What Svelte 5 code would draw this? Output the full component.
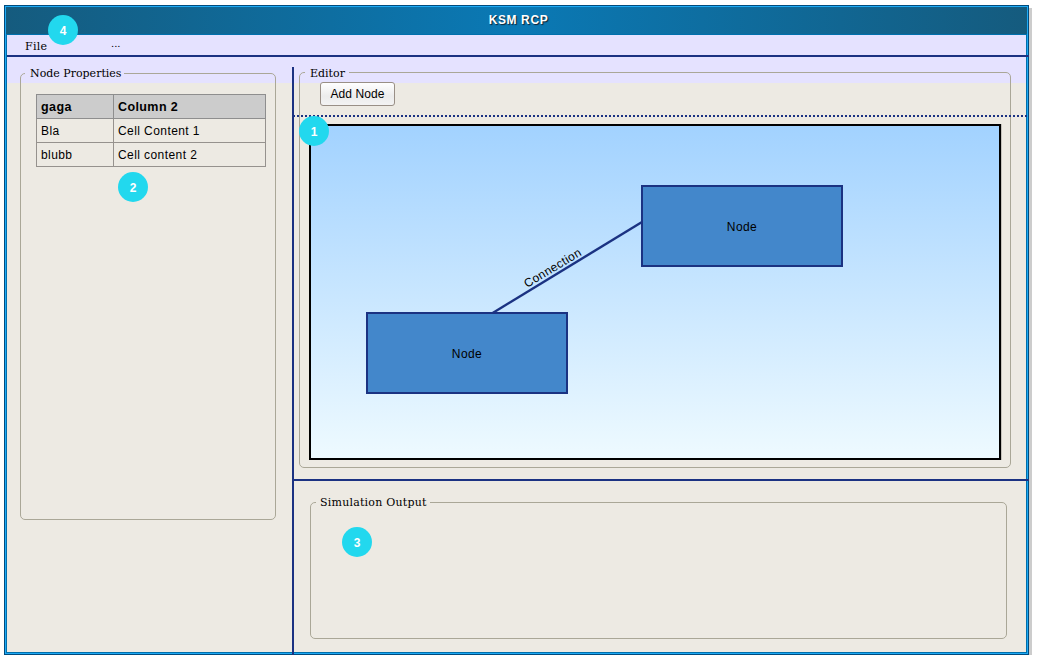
<script>
  const rows = [['Bla', 'Cell Content 1'], ['blubb', 'Cell content 2']];
  const nodes = [{ x: 331, y: 60 }, { x: 56, y: 187 }];
</script>

<div class="window">
  <header><span>KSM RCP</span></header>
  <nav><span class="file">File</span><span class="more">...</span></nav>
  <main>
    <aside>
      <fieldset class="properties">
        <legend>Node Properties</legend>
        <table>
          <thead><tr><th>gaga</th><th>Column 2</th></tr></thead>
          <tbody>
            {#each rows as row}
              <tr>{#each row as cell}<td>{cell}</td>{/each}</tr>
            {/each}
          </tbody>
        </table>
      </fieldset>
      <b class="badge two">2</b>
    </aside>
    <section class="right">
      <div class="top">
        <fieldset class="editor">
          <legend>Editor</legend>
          <button>Add Node</button>
          <div class="canvas">
            <svg width="688" height="332" viewBox="1 1 688 332">
              <line x1="332" y1="97" x2="181" y2="189" stroke="#1b3282" stroke-width="2.4" />
              {#each nodes as node}
                <rect x={node.x + 1} y={node.y + 1} width="200" height="80" fill="#4387cb" stroke="#1b3282" stroke-width="2" />
                <text x={node.x + 101} y={node.y + 46} text-anchor="middle">Node</text>
              {/each}
              <text class="connection" transform="translate(217 163) rotate(-31)">Connection</text>
            </svg>
          </div>
        </fieldset>
        <div class="dots"></div>
        <b class="badge one">1</b>
      </div>
      <div class="bottom">
        <fieldset class="output"><legend>Simulation Output</legend></fieldset>
        <b class="badge three">3</b>
      </div>
    </section>
  </main>
  <b class="badge four">4</b>
</div>

<style>
  :global(body) { background: #fff; }
  .window {
    position: relative;
    box-sizing: border-box;
    width: 1025px;
    height: 650px;
    margin: 5px 0 0 4px;
    border: 1px solid #004b7d;
    box-shadow: inset 0 0 0 1px #1eaaf5, inset 0 0 0 2px #0070ad, 3px 3px 0 #ccc;
    padding: 1px 2px 2px;
    background: #edeae3;
    font: 12px "Liberation Sans", sans-serif;
    color: #000;
    display: flow-root;
  }
  header {
    box-sizing: border-box;
    height: 28px;
    margin: 0 -1px;
    border-bottom: 1px solid #0070ad;
    background: linear-gradient(90deg, #155b7e, #0a79b5 50%, #155b7e);
    color: #fff;
    font-weight: bold;
    text-align: center;
    line-height: 26px;
    letter-spacing: .6px;
    text-shadow: 1px 1px 1px #123;
  }
  header span { position: relative; left: 2px; }
  nav {
    box-sizing: border-box;
    display: flex;
    height: 22px;
    margin-right: -3px;
    border-bottom: 2px solid #1b3282;
    background: linear-gradient(#e5e2ff, #e5e2ff) 0 0 / 1019px 100% no-repeat;
    font: 11px/24px "DejaVu Serif", serif;
    letter-spacing: .25px;
  }
  .file { width: 86px; padding-left: 18px; }
  .more { line-height: 18px; font-size: 10px; letter-spacing: 0; }
  main {
    display: flex;
    height: 598px;
    margin-right: -3px;
    background: linear-gradient(#e5e2ff, #e5e2ff) 0 0 / 1019px 26px no-repeat;
  }
  aside { position: relative; width: 285px; padding-top: 9px; }
  .right {
    box-sizing: border-box;
    width: 737px;
    margin-top: 10px;
    border-left: 2px solid #1b3282;
  }
  fieldset {
    box-sizing: border-box;
    min-width: 0;
    margin: 0;
    padding: 0;
    border: 1px solid #aaa797;
    border-radius: 5px;
  }
  legend {
    box-sizing: border-box;
    height: 15px;
    margin-left: 4px;
    padding: 0 0 0 5px;
    font: 11px/15px "DejaVu Serif", serif;
    white-space: nowrap;
  }
  .properties { width: 256px; height: 454px; margin-left: 13px; }
  .properties legend { width: 99px; }
  table {
    box-sizing: border-box;
    width: 230px;
    height: 73px;
    margin: 13px 0 0 15px;
    border-collapse: collapse;
    table-layout: fixed;
  }
  th, td { box-sizing: border-box; height: 24px; border: 1px solid #96928e; padding: 0 4px; text-align: left; white-space: nowrap; letter-spacing: .42px; }
  th { background: #ccc; font-size: 12.5px; letter-spacing: .4px; border-color: #8e8e8e; }
  th:first-child { width: 77px; }
  .top { position: relative; box-sizing: border-box; height: 414px; border-bottom: 2px solid #1b3282; }
  .editor { width: 712px; height: 403px; position: relative; top: -2px; margin-left: 5px; }
  .editor legend { width: 44px; margin-left: 5px; line-height: 17px; }
  button {
    display: block;
    box-sizing: border-box;
    width: 75px;
    height: 24px;
    margin: 2px 0 0 20px;
    padding: 1px 0 0;
    border: 1px solid #998f86;
    border-radius: 3px;
    background: linear-gradient(#fff, #ececec 60%, #f3f3f3);
    font: 12px/21px "Liberation Sans", sans-serif;
    letter-spacing: .1px;
    color: #000;
  }
  .canvas {
    box-sizing: border-box;
    width: 692px;
    height: 336px;
    margin: 18px 0 0 9px;
    border: 2px solid #000;
    box-shadow: 1px 0 0 #c5c2bc;
    background: linear-gradient(#a2d2ff, #eefaff);
  }
  svg { display: block; }
  svg text { font: 12px "Liberation Sans", sans-serif; letter-spacing: .4px; }
  .dots {
    position: absolute;
    left: 0;
    top: 48px;
    width: 735px;
    height: 2px;
    background: repeating-linear-gradient(90deg, #1b3282 0 1px, transparent 1px 3px, #1b3282 3px 4px);
  }
  .output { width: 697px; height: 144px; margin-left: 16px; }
  .output legend { width: 114px; margin-left: 5px; padding-left: 4px; letter-spacing: .22px; }
  .bottom { position: relative; padding-top: 14px; }
  .badge {
    position: absolute;
    width: 30px;
    height: 30px;
    border-radius: 50%;
    background: #22d8ee;
    color: #fff;
    font-size: 12px;
    line-height: 32px;
    text-align: center;
  }
  .one { left: 5px; top: 49px; }
  .two { left: 111px; top: 115px; }
  .three { left: 48px; top: 46px; }
  .four { left: 43px; top: 9px; }
</style>
